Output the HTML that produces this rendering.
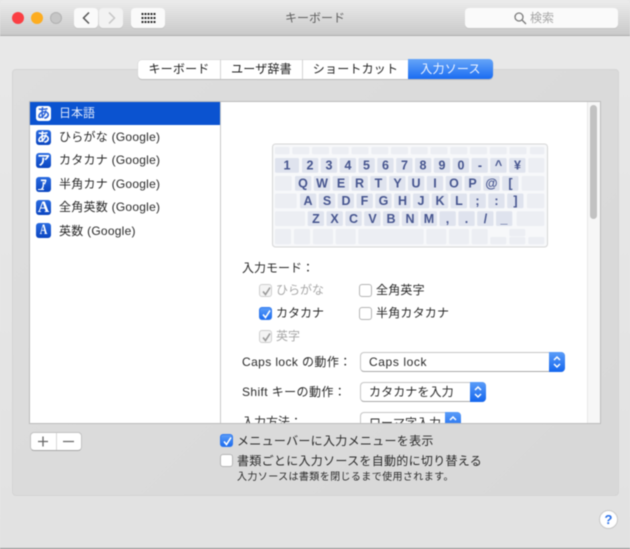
<!DOCTYPE html>
<html lang="ja">
<head>
<meta charset="utf-8">
<title>キーボード</title>
<style>
html,body{margin:0;padding:0;background:#e6e6e6;}
body{width:630px;height:549px;overflow:hidden;position:relative;font-family:"Liberation Sans","Noto Sans CJK JP",sans-serif;font-size:12px;color:#2a2a2a;}
#w{position:absolute;left:0;top:0;width:630px;height:549px;overflow:hidden;filter:blur(.45px);background:linear-gradient(#e9e9e9,#e2e2e2);}
#w div,#w span{position:absolute;box-sizing:border-box;}
.t{white-space:nowrap;line-height:16px;height:16px;}
.b{background:#fff;border-radius:4px;box-shadow:0 1px 0 #c4c4c4;}
.cb{width:13px;height:13px;border-radius:3px;background:#fff;border:1px solid #b5b5b5;}
.cb.on{background:linear-gradient(#5a9cf8,#1e6ef0);border:1px solid #2f78ee;}
.cb.dis{background:#f4f4f4;border:1px solid #cfcfcf;}
.cb svg{position:absolute;left:1px;top:1px;}
.ic{width:15px;height:15px;left:36px;border-radius:3px;background:linear-gradient(#2a6be0,#0a45c0);color:#fff;font-weight:bold;text-align:center;line-height:15px;font-size:13px;}
.pop{background:#fff;border-radius:4px;border:1px solid #c6c6c6;border-bottom-color:#aaa;height:20px;}
.pb{top:-1px;right:-1px;width:16px;height:20px;border-radius:0 4px 4px 0;background:linear-gradient(#5a9cf8,#1466ee);}
.tab{top:60px;height:19px;line-height:18px;text-align:center;white-space:nowrap;color:#222;letter-spacing:.2px;}
.l{letter-spacing:.25px;}
</style>
</head>
<body>
<div id="w">
  <!-- title bar -->
  <div style="left:0;top:0;width:630px;height:36px;background:linear-gradient(#ececec,#c9c9c9);border-bottom:1px solid #adadad;border-radius:5px 5px 0 0;"></div>
  <div style="left:12px;top:12px;width:12px;height:12px;border-radius:50%;background:#fb3f44;"></div>
  <div style="left:31px;top:12px;width:12px;height:12px;border-radius:50%;background:#fdad20;"></div>
  <div style="left:50px;top:12px;width:12px;height:12px;border-radius:50%;background:#c6c6c6;border:1px solid #b2b2b2;"></div>
  <div class="b" style="left:74px;top:8px;width:24px;height:20px;background:#fafafa;"></div>
  <div class="b" style="left:99px;top:8px;width:24px;height:20px;background:#f2f2f2;"></div>
  <div class="b" style="left:131px;top:8px;width:34px;height:20px;background:#fafafa;"></div>
  <svg style="position:absolute;left:74px;top:8px" width="91" height="20" fill="none">
    <path d="M15 4.5L9.5 10L15 15.5" stroke="#555" stroke-width="1.5"/>
    <path d="M35 4.5L40.5 10L35 15.5" stroke="#c6c6c6" stroke-width="1.5"/>
    <g fill="#2c2c2c">
      <rect x="67.5" y="5" width="2" height="2"/><rect x="70.5" y="5" width="2" height="2"/><rect x="73.5" y="5" width="2" height="2"/><rect x="76.5" y="5" width="2" height="2"/><rect x="79.5" y="5" width="2" height="2"/>
      <rect x="67.5" y="9" width="2" height="2"/><rect x="70.5" y="9" width="2" height="2"/><rect x="73.5" y="9" width="2" height="2"/><rect x="76.5" y="9" width="2" height="2"/><rect x="79.5" y="9" width="2" height="2"/>
      <rect x="67.5" y="13" width="2" height="2"/><rect x="70.5" y="13" width="2" height="2"/><rect x="73.5" y="13" width="2" height="2"/><rect x="76.5" y="13" width="2" height="2"/><rect x="79.5" y="13" width="2" height="2"/>
    </g>
  </svg>
  <div class="t" style="left:285px;top:10px;color:#606060;">キーボード</div>
  <div class="b" style="left:465px;top:8px;width:153px;height:20px;background:#fafafa;"></div>
  <svg style="position:absolute;left:513px;top:11px" width="14" height="14" fill="none" stroke="#7c7c7c" stroke-width="1.3"><circle cx="6" cy="6" r="4"/><path d="M9 9L13 13"/></svg>
  <div class="t" style="left:530px;top:10px;color:#a6a6a6;">検索</div>

  <!-- panel -->
  <div style="left:12px;top:69px;width:607px;height:427px;border-radius:4px;background:linear-gradient(135deg,#dedede,#d8d8d8);border:1px solid #d4d4d4;"></div>

  <!-- tabs -->
  <div style="left:138px;top:60px;width:355px;height:19px;border-radius:4px;background:#fff;box-shadow:0 1px 0 #bcbcbc,0 0 0 .5px #cfcfcf;"></div>
  <div class="tab" style="left:138px;width:82px;">キーボード</div>
  <div class="tab" style="left:221px;width:81px;">ユーザ辞書</div>
  <div class="tab" style="left:303px;width:105px;">ショートカット</div>
  <div style="left:220px;top:60px;width:1px;height:19px;background:#d4d4d4;"></div>
  <div style="left:302px;top:60px;width:1px;height:19px;background:#d4d4d4;"></div>
  <div class="tab" style="left:408px;top:59px;width:85px;height:20px;border-radius:0 4px 4px 0;background:linear-gradient(#66a5f8,#1a6cf2);color:#eef4ff;line-height:20px;">入力ソース</div>

  <!-- list + detail frame -->
  <div style="left:29px;top:101px;width:572px;height:323px;background:#fff;border:1px solid #bcbcbc;overflow:hidden;">
    <div style="left:190px;top:0;width:1px;height:321px;background:#c8c8c8;"></div>
    <div style="left:557px;top:0;width:13px;height:321px;background:#f7f7f7;border-left:1px solid #e8e8e8;"></div>
    <div style="left:560px;top:3px;width:7px;height:114px;border-radius:4px;background:#c2c2c2;"></div>
    <div style="left:0;top:0;width:190px;height:23px;background:#0b53d0;"></div>
  </div>

  <!-- list -->
  <div class="ic" style="top:106px;background:#fff;color:#2a62d8;">あ</div>
  <div class="t" style="left:59px;top:105px;color:#dfe8fb;">日本語</div>
  <div class="ic" style="top:130px;">あ</div>
  <div class="t l" style="left:59px;top:129px;">ひらがな (Google)</div>
  <div class="ic" style="top:153px;">ア</div>
  <div class="t l" style="left:59px;top:152px;">カタカナ (Google)</div>
  <div class="ic" style="top:177px;font-size:13px;">ｱ<span style="left:2px;top:12px;width:6px;height:1px;background:#fff;"></span></div>
  <div class="t l" style="left:59px;top:176px;">半角カナ (Google)</div>
  <div class="ic" style="top:200px;font-family:'Liberation Serif',serif;font-size:16px;">A</div>
  <div class="t l" style="left:59px;top:199px;">全角英数 (Google)</div>
  <div class="ic" style="top:223px;font-family:'Liberation Serif',serif;font-size:15px;"><span style="left:0;top:0;width:15px;transform:scaleX(.7);">A</span></div>
  <div class="t l" style="left:59px;top:223px;">英数 (Google)</div>

  <!-- keyboard -->
  <svg style="position:absolute;left:0;top:0" width="630" height="549" font-family="Liberation Sans, Noto Sans CJK JP, sans-serif" font-size="12.5" font-weight="bold" fill="#46558f" text-anchor="middle">
    <rect x="272.5" y="144" width="275" height="103" rx="3" fill="#f7f8fa" stroke="#d6d6d6"/>
    <g fill="#eceef3">
      <rect x="275" y="147" width="14.5" height="7.3" rx="1.5"/><rect x="292.3" y="147" width="17" height="7.3" rx="1.5"/><rect x="312" y="147" width="17" height="7.3" rx="1.5"/><rect x="331.8" y="147" width="17" height="7.3" rx="1.5"/><rect x="351.5" y="147" width="17" height="7.3" rx="1.5"/><rect x="371.3" y="147" width="17" height="7.3" rx="1.5"/><rect x="391" y="147" width="17" height="7.3" rx="1.5"/><rect x="410.8" y="147" width="17" height="7.3" rx="1.5"/><rect x="430.5" y="147" width="17" height="7.3" rx="1.5"/><rect x="450.3" y="147" width="17" height="7.3" rx="1.5"/><rect x="470" y="147" width="17" height="7.3" rx="1.5"/><rect x="489.8" y="147" width="17" height="7.3" rx="1.5"/><rect x="509.5" y="147" width="17" height="7.3" rx="1.5"/><rect x="530" y="147" width="14.3" height="7.3" rx="1.5"/>
      <rect x="528.3" y="158" width="16" height="14.7" rx="1.5"/>
      <rect x="275" y="176" width="16.7" height="14.7" rx="1.5"/><rect x="521.7" y="176" width="22.6" height="14.7" rx="1.5"/>
      <rect x="275" y="193.5" width="21.7" height="14.7" rx="1.5"/><rect x="527" y="193.5" width="17.3" height="14.7" rx="1.5"/>
      <rect x="275" y="211.3" width="30" height="14.7" rx="1.5"/><rect x="516.7" y="211.3" width="27.6" height="14.7" rx="1.5"/>
      <rect x="275" y="229" width="16" height="15.3" rx="1.5"/><rect x="294" y="229" width="16" height="15.3" rx="1.5"/><rect x="313" y="229" width="20" height="15.3" rx="1.5"/><rect x="335.7" y="229" width="20" height="15.3" rx="1.5"/><rect x="358.3" y="229" width="65.4" height="15.3" rx="1.5"/><rect x="426.3" y="229" width="20" height="15.3" rx="1.5"/><rect x="449" y="229" width="20" height="15.3" rx="1.5"/><rect x="471.7" y="229" width="16" height="15.3" rx="1.5"/>
      <rect x="490.3" y="237" width="16" height="7.3" rx="1.5"/><rect x="509.3" y="229" width="16" height="7.3" rx="1.5"/><rect x="509.3" y="237" width="16" height="7.3" rx="1.5"/><rect x="528.3" y="237" width="16" height="7.3" rx="1.5"/>
    </g>
    <g fill="#dfe3ee">
      <rect x="275" y="158" width="24" height="14.7" rx="1.5"/><rect x="302" y="158" width="16.3" height="14.7" rx="1.5"/><rect x="320.8" y="158" width="16.3" height="14.7" rx="1.5"/><rect x="339.7" y="158" width="16.3" height="14.7" rx="1.5"/><rect x="358.5" y="158" width="16.3" height="14.7" rx="1.5"/><rect x="377.3" y="158" width="16.3" height="14.7" rx="1.5"/><rect x="396.2" y="158" width="16.3" height="14.7" rx="1.5"/><rect x="415" y="158" width="16.3" height="14.7" rx="1.5"/><rect x="433.8" y="158" width="16.3" height="14.7" rx="1.5"/><rect x="452.7" y="158" width="16.3" height="14.7" rx="1.5"/><rect x="471.5" y="158" width="16.3" height="14.7" rx="1.5"/><rect x="490.3" y="158" width="16.3" height="14.7" rx="1.5"/><rect x="509.2" y="158" width="16.3" height="14.7" rx="1.5"/>
      <rect x="295" y="176" width="16.3" height="14.7" rx="1.5"/><rect x="313.8" y="176" width="16.3" height="14.7" rx="1.5"/><rect x="332.7" y="176" width="16.3" height="14.7" rx="1.5"/><rect x="351.5" y="176" width="16.3" height="14.7" rx="1.5"/><rect x="370.3" y="176" width="16.3" height="14.7" rx="1.5"/><rect x="389.2" y="176" width="16.3" height="14.7" rx="1.5"/><rect x="408" y="176" width="16.3" height="14.7" rx="1.5"/><rect x="426.8" y="176" width="16.3" height="14.7" rx="1.5"/><rect x="445.7" y="176" width="16.3" height="14.7" rx="1.5"/><rect x="464.5" y="176" width="16.3" height="14.7" rx="1.5"/><rect x="483.3" y="176" width="16.3" height="14.7" rx="1.5"/><rect x="502.2" y="176" width="16.3" height="14.7" rx="1.5"/>
      <rect x="300" y="193.5" width="16.3" height="14.7" rx="1.5"/><rect x="318.8" y="193.5" width="16.3" height="14.7" rx="1.5"/><rect x="337.7" y="193.5" width="16.3" height="14.7" rx="1.5"/><rect x="356.5" y="193.5" width="16.3" height="14.7" rx="1.5"/><rect x="375.3" y="193.5" width="16.3" height="14.7" rx="1.5"/><rect x="394.2" y="193.5" width="16.3" height="14.7" rx="1.5"/><rect x="413" y="193.5" width="16.3" height="14.7" rx="1.5"/><rect x="431.8" y="193.5" width="16.3" height="14.7" rx="1.5"/><rect x="450.7" y="193.5" width="16.3" height="14.7" rx="1.5"/><rect x="469.5" y="193.5" width="16.3" height="14.7" rx="1.5"/><rect x="488.3" y="193.5" width="16.3" height="14.7" rx="1.5"/><rect x="507.2" y="193.5" width="16.3" height="14.7" rx="1.5"/>
      <rect x="307.7" y="211.3" width="16.3" height="14.7" rx="1.5"/><rect x="326.5" y="211.3" width="16.3" height="14.7" rx="1.5"/><rect x="345.4" y="211.3" width="16.3" height="14.7" rx="1.5"/><rect x="364.2" y="211.3" width="16.3" height="14.7" rx="1.5"/><rect x="383" y="211.3" width="16.3" height="14.7" rx="1.5"/><rect x="401.9" y="211.3" width="16.3" height="14.7" rx="1.5"/><rect x="420.7" y="211.3" width="16.3" height="14.7" rx="1.5"/><rect x="439.5" y="211.3" width="16.3" height="14.7" rx="1.5"/><rect x="458.4" y="211.3" width="16.3" height="14.7" rx="1.5"/><rect x="477.2" y="211.3" width="16.3" height="14.7" rx="1.5"/><rect x="496" y="211.3" width="16.3" height="14.7" rx="1.5"/>
    </g>
    <text x="287" y="169.5">1</text><text x="310" y="169.5">2</text><text x="329" y="169.5">3</text><text x="348" y="169.5">4</text><text x="366.5" y="169.5">5</text><text x="385.5" y="169.5">6</text><text x="404.5" y="169.5">7</text><text x="423" y="169.5">8</text><text x="442" y="169.5">9</text><text x="461" y="169.5">0</text><text x="480" y="169.5">-</text><text x="498.5" y="169.5">^</text><text x="517.5" y="169.5">¥</text>
    <text x="303" y="187.5">Q</text><text x="322" y="187.5">W</text><text x="341" y="187.5">E</text><text x="359.5" y="187.5">R</text><text x="378.5" y="187.5">T</text><text x="397.5" y="187.5">Y</text><text x="416" y="187.5">U</text><text x="435" y="187.5">I</text><text x="454" y="187.5">O</text><text x="472.5" y="187.5">P</text><text x="491.5" y="187.5">@</text><text x="510.5" y="187.5">[</text>
    <text x="308" y="205">A</text><text x="327" y="205">S</text><text x="346" y="205">D</text><text x="364.5" y="205">F</text><text x="383.5" y="205">G</text><text x="402.5" y="205">H</text><text x="421" y="205">J</text><text x="440" y="205">K</text><text x="459" y="205">L</text><text x="477.5" y="205">;</text><text x="496.5" y="205">:</text><text x="515.5" y="205">]</text>
    <text x="316" y="223">Z</text><text x="334.5" y="223">X</text><text x="353.5" y="223">C</text><text x="372.5" y="223">V</text><text x="391" y="223">B</text><text x="410" y="223">N</text><text x="429" y="223">M</text><text x="447.5" y="223">,</text><text x="466.5" y="223">.</text><text x="485.5" y="223">/</text><text x="504" y="223">_</text>
  </svg>

  <!-- input mode -->
  <div class="t" style="left:242px;top:260px;">入力モード：</div>
  <div class="cb dis" style="left:259px;top:284px;"><svg width="11" height="11" fill="none" stroke="#9a9a9a" stroke-width="1.6"><path d="M2 5.5L4.5 8.5L9 1.5"/></svg></div>
  <div class="t" style="left:276px;top:282px;color:#a8a8a8;">ひらがな</div>
  <div class="cb" style="left:359px;top:284px;"></div>
  <div class="t" style="left:376px;top:282px;letter-spacing:.2px;">全角英字</div>
  <div class="cb on" style="left:259px;top:307px;"><svg width="11" height="11" fill="none" stroke="#fff" stroke-width="1.6"><path d="M2 5.5L4.5 8.5L9 1.5"/></svg></div>
  <div class="t" style="left:276px;top:305px;">カタカナ</div>
  <div class="cb" style="left:359px;top:307px;"></div>
  <div class="t" style="left:376px;top:305px;letter-spacing:.2px;">半角カタカナ</div>
  <div class="cb dis" style="left:259px;top:330px;"><svg width="11" height="11" fill="none" stroke="#9a9a9a" stroke-width="1.6"><path d="M2 5.5L4.5 8.5L9 1.5"/></svg></div>
  <div class="t" style="left:276px;top:328px;color:#a8a8a8;">英字</div>

  <div class="t" style="left:242px;top:354px;letter-spacing:.4px;">Caps lock の動作：</div>
  <div class="pop" style="left:360px;top:352px;width:205px;">
    <span class="t" style="left:8px;top:1px;letter-spacing:.6px;">Caps lock</span>
    <span class="pb"><svg width="16" height="20" fill="none" stroke="#fff" stroke-width="1.5" style="position:absolute;left:0;top:0"><path d="M5 8L8 5L11 8M5 12L8 15L11 12"/></svg></span>
  </div>
  <div class="t" style="left:242px;top:384px;letter-spacing:.4px;">Shift キーの動作：</div>
  <div class="pop" style="left:360px;top:382px;width:126px;">
    <span class="t" style="left:8px;top:1px;letter-spacing:.1px;">カタカナを入力</span>
    <span class="pb"><svg width="16" height="20" fill="none" stroke="#fff" stroke-width="1.5" style="position:absolute;left:0;top:0"><path d="M5 8L8 5L11 8M5 12L8 15L11 12"/></svg></span>
  </div>
  <div style="left:221px;top:405px;width:364px;height:18px;overflow:hidden;">
    <div class="t" style="left:21px;top:9px;">入力方法：</div>
    <div class="pop" style="left:139px;top:7px;width:101px;">
      <span class="t" style="left:8px;top:2px;">ローマ字入力</span>
      <span class="pb"><svg width="16" height="20" fill="none" stroke="#fff" stroke-width="1.5" style="position:absolute;left:0;top:0"><path d="M5 8L8 5L11 8"/></svg></span>
    </div>
  </div>

  <!-- + - -->
  <div style="left:30px;top:432px;width:52px;height:19px;background:#fff;border-radius:4px;border:1px solid #c2c2c2;border-bottom-color:#a8a8a8;"></div>
  <div style="left:56px;top:433px;width:1px;height:17px;background:#d8d8d8;"></div>
  <svg style="position:absolute;left:30px;top:432px" width="52" height="19" fill="none" stroke="#666" stroke-width="1.3"><path d="M13 4.5V14.5M8 9.5H18M33 9.5H44"/></svg>

  <!-- bottom options -->
  <div class="cb on" style="left:220px;top:434px;"><svg width="11" height="11" fill="none" stroke="#fff" stroke-width="1.6"><path d="M2 5.5L4.5 8.5L9 1.5"/></svg></div>
  <div class="t" style="left:237px;top:433px;letter-spacing:.3px;">メニューバーに入力メニューを表示</div>
  <div class="cb" style="left:220px;top:454px;"></div>
  <div class="t" style="left:237px;top:453px;letter-spacing:.3px;">書類ごとに入力ソースを自動的に切り替える</div>
  <div class="t" style="left:237px;top:470px;font-size:10px;letter-spacing:.4px;">入力ソースは書類を閉じるまで使用されます。</div>

  <!-- help -->
  <div style="left:599px;top:510px;width:19px;height:19px;border-radius:50%;background:#fff;border:1px solid #c8c8c8;color:#2a70e8;font-weight:bold;font-size:13px;line-height:17px;text-align:center;">?</div>

  <!-- bottom edge -->
  <div style="left:0;top:548px;width:630px;height:1px;background:#8a8a8a;"></div>
</div>
</body>
</html>
